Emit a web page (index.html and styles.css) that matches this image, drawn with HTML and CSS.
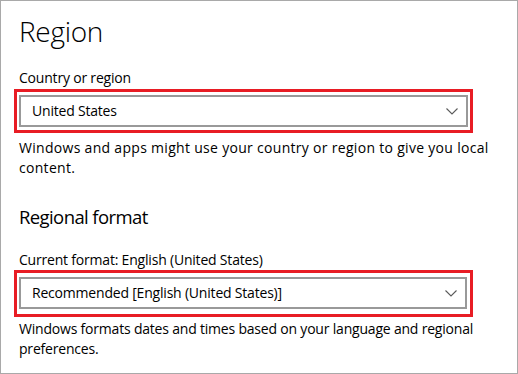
FILE: index.html
```html
<!DOCTYPE html>
<html lang="en">
<head>
  <meta charset="UTF-8" />
  <meta name="viewport" content="width=device-width,initial-scale=1" />
  <title>Region</title>
  <link rel="stylesheet" href="styles.css">
</head>
<body>
  <div class="frame">
    <h1 class="title">Region</h1>

    <div class="field">
      <div class="label">Country or region</div>
      <div class="mark mark-first">
        <div class="select">
          <span>United States</span>
          <svg class="chevron" width="12" height="7" viewBox="0 0 12 7">
            <polyline points="0.5,0.5 6,6 11.5,0.5" fill="none" stroke="#5a5a5a" stroke-width="1.1" />
          </svg>
        </div>
      </div>
      <p class="note note-first">Windows and apps might use your country or region to give you local content.</p>
    </div>

    <h2 class="subtitle">Regional format</h2>

    <div class="field">
      <div class="label">Current format: English (United States)</div>
      <div class="mark mark-second">
        <div class="select">
          <span>Recommended [English (United States)]</span>
          <svg class="chevron" width="12" height="7" viewBox="0 0 12 7">
            <polyline points="0.5,0.5 6,6 11.5,0.5" fill="none" stroke="#5a5a5a" stroke-width="1.1" />
          </svg>
        </div>
      </div>
      <p class="note note-second">Windows formats dates and times based on your language and regional preferences.</p>
    </div>
  </div>
</body>
</html>
```

FILE: styles.css
```css
:root {
  --fg: #000;
  --frame: #a9a9a9;
  --field: #999;
  --mark: #e81c24;
}
* { box-sizing: border-box; margin:0; padding:0 }
html, body {
  height:100%; background:#fff; color:var(--fg);
  font-family:"Open Sans","Noto Sans",sans-serif;
}

.frame {
  height:100%;
  border:1px solid var(--frame);
  padding:12px 0 0 18px;
}

.title {
  font-size:28px; font-weight:300; line-height:36px;
  letter-spacing:-0.3px;
}
.subtitle {
  margin-top:25px;
  font-size:18.5px; font-weight:400; line-height:28px;
  letter-spacing:-0.6px;
}

.field { width:492px }
.label {
  margin-top:19px;
  font-size:14px; line-height:20px;
  letter-spacing:-0.2px;
}

.mark {
  width:459px;
  margin-left:-5px;
  border:3px solid var(--mark);
  padding:3px 2px;
}
.mark-first { margin-top:1px }
.mark-second { padding:4px 3px 5px 2px; margin-top:0 }

.select {
  display:flex; align-items:center; justify-content:space-between;
  height:32px;
  border:2px solid var(--field);
  padding:0 8px 0 11px;
  font-size:14px; line-height:28px;
  letter-spacing:-0.2px;
}
.chevron { display:block }

.note {
  font-size:14px; line-height:20px;
}
.note-first { margin-top:5px; letter-spacing:0.3px }
.note-second { margin-top:2px; letter-spacing:-0.2px }
```
